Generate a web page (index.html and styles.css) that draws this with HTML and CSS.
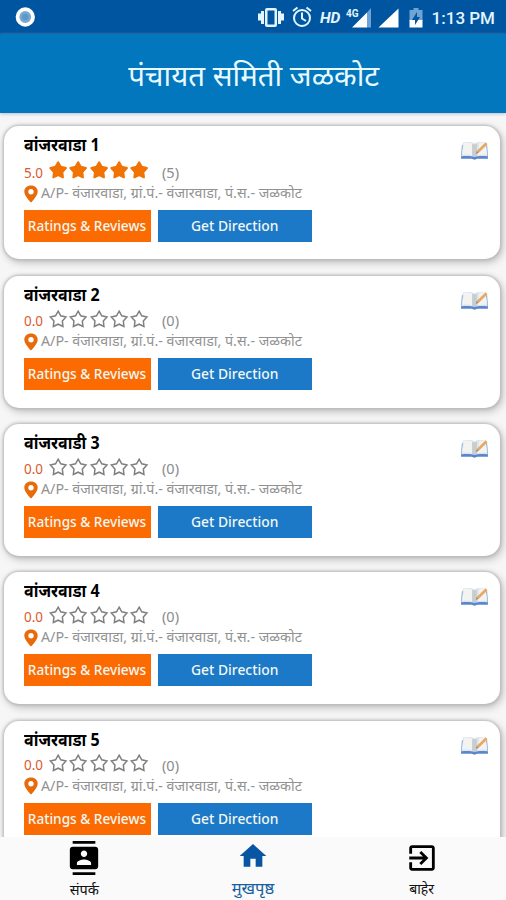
FILE: index.html
```
<!DOCTYPE html>
<html lang="mr">
<head>
<meta charset="utf-8">
<title>पंचायत समिती जळकोट</title>
<link rel="stylesheet" href="styles.css">
</head>
<body>
<svg class="defs" width="0" height="0">
  <symbol id="star" viewBox="0 0 20 20"><path d="M10 2.200l2.600 4.600 5.200 1.200-3.600 4 .6 5.400L10 15.200l-4.800 2.200.6-5.400-3.600-4 5.200-1.200z"/></symbol>
  <symbol id="pin" viewBox="0 0 14 18"><path fill="#e96a08" fill-rule="evenodd" d="M7 0.500C3 .5.300 3.200.300 6.700.300 11 7 17.500 7 17.500s6.700-6.500 6.700-10.800C13.700 3.200 11 .5 7 .5zM7 4a2.700 2.700 0 1 1 0 5.400A2.700 2.700 0 0 1 7 4z"/></symbol>
  <symbol id="book" viewBox="0 0 30 20">
    <path fill="#5c86cc" d="M2 4h26l1 14H18l-3 1-3-1H1z"/>
    <path fill="#dce5ee" d="M3 1.500C8 .5 12 .5 15 2c3-1.500 8-1.500 12-.5l1.500 14c-5-.5-10-.5-13.500 .5-3.500-1-8.500-1-13.500-.5z"/>
    <path fill="#f3f4f2" d="M4 2c4-.7 7-.6 9.500.6v12C10 13.600 6 13.500 2.500 14zM20 1.600c2.500-.3 4-.2 6.500.3l1.200 12c-3-.5-6-.3-9 .3z"/>
    <path fill="#c9cdcd" d="M12.500 2.500L15 3.300l2.500-.8v12.600L15 15.500l-2.500-.5z"/>
    <path fill="none" stroke="#e9a860" stroke-width="2.800" d="M27.500 2L18.500 10.700"/>
    <path fill="#998781" d="M17.400 9.800l2 2-3 1.200z"/>
  </symbol>
</svg>
<div class="status">
  <svg class="status-dot" width="22" height="22" viewBox="0 0 22 22"><circle cx="11" cy="11" r="8.300" fill="#79a9d2" stroke="#fff" stroke-width="4"/><circle cx="11" cy="11" r="3.500" fill="#5b99cb"/></svg>
  <svg class="status-icons" width="175" height="34" viewBox="0 0 175 34" fill="#e4f5ff">
    <rect x="9" y="8" width="12" height="19" rx="2"/><rect x="11.500" y="10.500" width="7" height="14" fill="#0055a0"/>
    <path d="M5 11h3v13H5zM22 11h3v13h-3zM2 13.500h3v7H2zM25 13.500h3v7h-3z"/>
    <g fill="none" stroke="#e4f5ff" stroke-width="2"><circle cx="46" cy="18" r="8"/><path d="M46 12.500v6l4 2.500M37 11l4.500-3.500M55 11l-4.500-3.500"/></g>
    <text class="hd" x="64" y="23">HD</text>
    <path fill="#fff" d="M96 27.500l15-15v15z"/><path fill="#6ea3d3" d="M111 12.500l4-4.500v19.500h-4z"/>
    <text class="four" x="90" y="16.500">4G</text>
    <path fill="#fff" d="M122.500 27.500l20-19v19z"/>
    <path fill="#6ea3d3" d="M153.500 10h4V8h5v2h4v11h-13z"/><path fill="#fff" d="M153.500 20h13v7.500h-13z"/><path fill="#0055a0" d="M161 12l-5 8h3v5l5-8h-3z"/>
  </svg>
  <span class="clock">1:13 PM</span>
</div>
<header class="bar"><h1>पंचायत समिती जळकोट</h1></header>
<main class="list" id="list"></main>
<nav class="tabs">
  <div class="tab"><svg width="34" height="34" viewBox="0 0 24 24" fill="#000"><path d="M20 0H4v2h16V0zM4 24h16v-2H4v2zM20 4H4c-1.100 0-2 .9-2 2v12c0 1.100.9 2 2 2h16c1.100 0 2-.9 2-2V6c0-1.100-.9-2-2-2zm-8 2.750c1.240 0 2.250 1.010 2.250 2.250S13.240 11.250 12 11.250 9.750 10.240 9.750 9 10.760 6.750 12 6.750zM17 17H7v-1.500c0-1.670 3.330-2.500 5-2.500s5 .83 5 2.500V17z"/></svg><span class="tab-a">संपर्क</span></div>
  <div class="tab active"><svg width="32" height="32" viewBox="0 0 24 24" fill="#0855a4"><path d="M10 20v-6h4v6h5v-8h3L12 3 2 12h3v8z"/></svg><span class="tab-b">मुखपृष्ठ</span></div>
  <div class="tab"><svg width="34" height="34" viewBox="0 0 24 24" fill="#000"><path d="M10.090 15.590L11.500 17l5-5-5-5-1.410 1.410L12.670 11H3v2h9.670l-2.580 2.590zM19 3H5c-1.110 0-2 .9-2 2v4h2V5h14v14H5v-4H3v4c0 1.100.89 2 2 2h14c1.100 0 2-.9 2-2V5c0-1.100-.9-2-2-2z"/></svg><span class="tab-c">बाहेर</span></div>
</nav>
<script src="app.js"></script>
</body>
</html>
```
FILE: styles.css
```
* { box-sizing: border-box; }
body {
  margin: 0;
  width: 506px;
  height: 900px;
  overflow: hidden;
  display: flex;
  flex-direction: column;
  background: #f6f6f7;
  font-family: "Noto Sans", "Noto Sans Devanagari", sans-serif;
}
.defs { display: none; }
.status {
  height: 34px;
  flex: none;
  display: flex;
  align-items: center;
  background: #0055a0;
  padding: 0 11px 0 15px;
}
.status-icons { margin-left: 218px; flex: none; transform: translateX(2px); }
.hd { font: italic 700 15.500px Roboto, sans-serif; }
.four { font: 700 10px Roboto, sans-serif; }
.clock {
  margin-left: 3px;
  padding-top: 2px;
  white-space: nowrap;
  color: #e4f5ff;
  font: 500 17px Roboto, sans-serif;
}
.bar {
  height: 79px;
  flex: none;
  display: flex;
  justify-content: center;
  align-items: center;
  background: #0277bd;
  box-shadow: 0 1px 3px #b9bdd5;
}
.bar h1 {
  margin: 0;
  padding-top: 2px;
  white-space: nowrap;
  color: #e8faff;
  font-size: 29px;
  font-weight: 400;
  transform: translateX(1px) scaleX(1.015);
}
.list {
  flex: 1;
  min-height: 0;
  overflow: hidden;
  padding: 13px 6px 0 4px;
}
.card {
  height: 132px;
  margin-bottom: 16.200px;
  padding: 6px 11px 0 20px;
  display: flex;
  justify-content: space-between;
  background: #fff;
  border-radius: 15px;
  box-shadow: 0 0 3px 1px #b8b8b8, 2px 3px 8px #b5b5b5;
}
.card.first { height: 133px; margin-bottom: 17px; }
.first .rate { margin-top: 2px; }
.book { margin-top: 9px; flex: none; }
.info { display: flex; flex-direction: column; }
.info h2 {
  margin: 0;
  height: 26px;
  line-height: 25px;
  font-size: 18px;
  font-weight: 700;
  color: #000;
  white-space: nowrap;
  transform: scaleX(.89);
  transform-origin: left;
}
.rate {
  display: flex;
  height: 23px;
  align-items: center;
  font-size: 14px;
  white-space: nowrap;
}
.score { width: 24px; padding-top: 2px; color: #dc5a2c; font-size: 13.500px; }
.stars { display: flex; width: 114px; }
.stars svg { width: 20.300px; height: 20px; flex: none; fill: #fff; stroke: #808080; stroke-width: 1.500; margin-top: -2px; }
.first .stars svg { fill: #f17304; stroke: #f17304; stroke-width: 2; stroke-linejoin: round; margin-top: -3px; }
.count { color: #8b8b8b; padding-top: 1px; font-size: 14.500px; }
.addr {
  display: flex;
  align-items: center;
  height: 20px;
  gap: 3px;
  color: #929292;
  font-size: 15px;
  white-space: nowrap;
}
.addr span { transform: scaleX(.95) translateY(-1px); transform-origin: left; }
.addr svg { flex: none; margin-top: 1px; }
.actions { display: flex; gap: 7px; margin-top: 7px; }
.btn {
  height: 32px;
  display: flex;
  align-items: center;
  justify-content: center;
  color: #f1f7f2;
  font-size: 14.500px;
  font-weight: 500;
  white-space: nowrap;
}
.btn span { transform: translate(-1px, -1px) scaleX(.94); }
.direction span { transform: translateY(-1px) scaleX(.955); }
.review { width: 127px; background: #fb6b02; }
.direction { width: 154px; background: #1b79c7; }
.tabs {
  position: relative;
  height: 63px;
  flex: none;
  display: flex;
  background: #fafafa;
}
.tab {
  width: 33.333%;
  display: grid;
  grid-template-rows: 41px 22px;
  justify-items: center;
  align-items: center;
  font-size: 14px;
  color: #111;
}
.tab span { white-space: nowrap; line-height: 20px; }
.tab .tab-a { font-size: 14.500px; }
.active { color: #175fa0; }
.tab .tab-b { font-size: 16.500px; transform: translateY(-1px); }
.active svg { margin-top: -4px; }
```
FILE: app.js
```
const names = ["वांजरवाडा 1", "वांजरवाडा 2", "वांजरवाडी 3", "वांजरवाडा 4", "वांजरवाडा 5"];
const star = '<svg><use href="#star"/></svg>';
document.getElementById("list").innerHTML = names.map((name, i) => `
  <article class="card${i === 0 ? " first" : ""}">
    <div class="info">
      <h2>${name}</h2>
      <div class="rate"><span class="score">${i === 0 ? "5.0" : "0.0"}</span><span class="stars">${star.repeat(5)}</span><span class="count">(${i === 0 ? 5 : 0})</span></div>
      <div class="addr"><svg width="14" height="18"><use href="#pin"/></svg><span>A/P- वंजारवाडा, ग्रां.पं.- वंजारवाडा, पं.स.- जळकोट</span></div>
      <div class="actions"><div class="btn review"><span>Ratings &amp; Reviews</span></div><div class="btn direction"><span>Get Direction</span></div></div>
    </div>
    <svg class="book" width="29" height="20"><use href="#book"/></svg>
  </article>`).join("");
```
